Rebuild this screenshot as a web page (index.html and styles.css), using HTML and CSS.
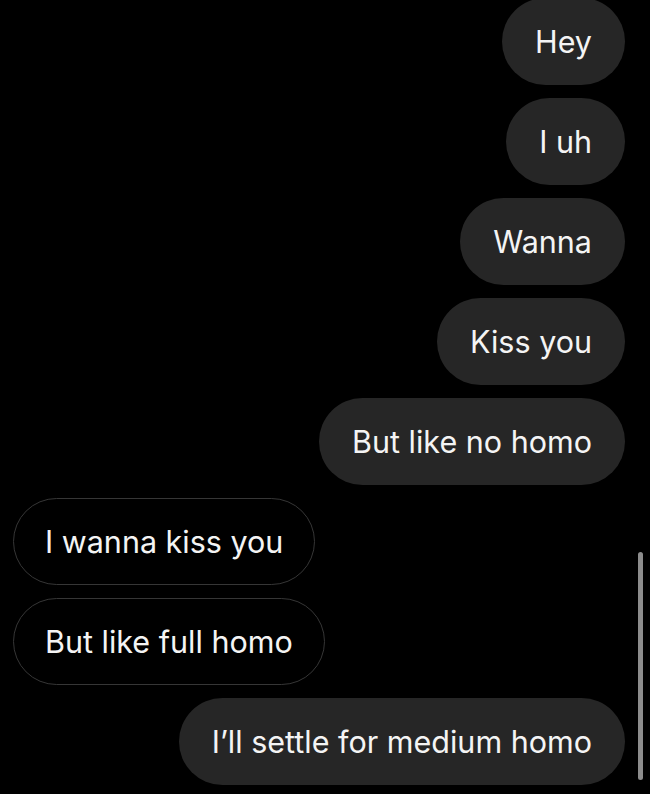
FILE: index.html
```html
<!doctype html>
<html lang="en">
<head>
    <meta charset="UTF-8">
    <meta name="viewport" content="width=device-width, initial-scale=1.0">
    <title>Messages</title>
    <link rel="stylesheet" href="styles.css">
</head>
<body>
<div class="thread">
    <div class="msg sent">Hey</div>
    <div class="msg sent">I uh</div>
    <div class="msg sent">Wanna</div>
    <div class="msg sent">Kiss you</div>
    <div class="msg sent">But like no homo</div>
    <div class="msg received">I wanna kiss you</div>
    <div class="msg received">But like full homo</div>
    <div class="msg sent">I’ll settle for medium homo</div>
</div>
<div class="scrollbar"></div>
</body>
</html>
```

FILE: styles.css
```css
html, body {
    background: #000;
}
body {
    margin: 0;
    height: 794px;
    overflow: hidden;
    font-family: Inter, "Noto Sans", sans-serif;
    color: #f4f4f4;
}
.thread {
    display: flex;
    flex-direction: column;
    gap: 13px;
    padding: 0 25px 0 13px;
    margin-top: -2px;
}
.msg {
    height: 87px;
    box-sizing: border-box;
    border-radius: 44px;
    display: flex;
    align-items: center;
    padding: 0 33px;
    font-size: 30.5px;
    white-space: nowrap;
}
.sent {
    align-self: flex-end;
    background: #262626;
}
.received {
    align-self: flex-start;
    border: 1.5px solid #363636;
    padding: 0 31px;
}
.scrollbar {
    position: absolute;
    left: 638px;
    top: 552px;
    width: 5px;
    height: 228px;
    border-radius: 3px;
    background: #8c8c8c;
}
```
